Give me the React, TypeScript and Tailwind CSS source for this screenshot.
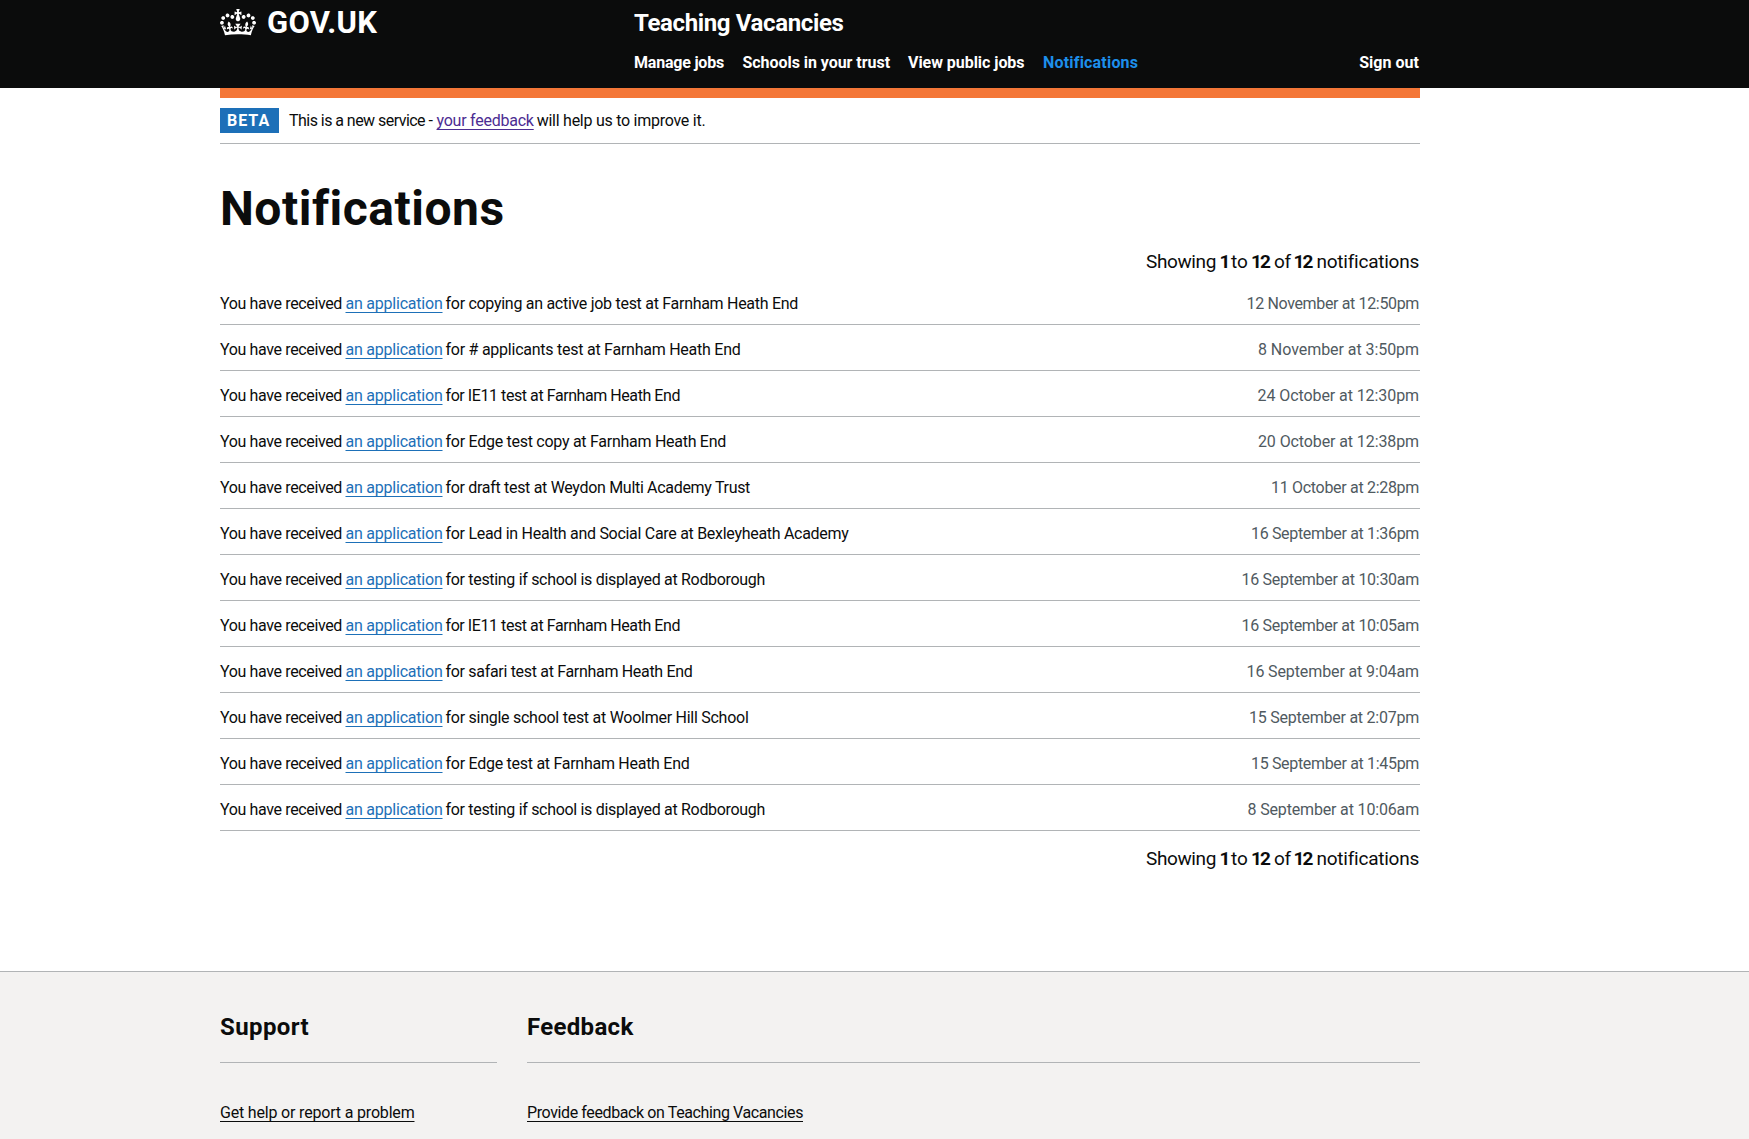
import React from "react";

type Notification = {
  text: string;
  textTracking: string;
  date: string;
  dateTracking: string;
};

const notifications: Notification[] = [
  { text: "for copying an active job test at Farnham Heath End", textTracking: "tracking-[-0.287px]", date: "12 November at 12:50pm", dateTracking: "tracking-[-0.349px]" },
  { text: "for # applicants test at Farnham Heath End", textTracking: "tracking-[-0.249px]", date: "8 November at 3:50pm", dateTracking: "tracking-[-0.059px]" },
  { text: "for IE11 test at Farnham Heath End", textTracking: "tracking-[-0.432px]", date: "24 October at 12:30pm", dateTracking: "tracking-[-0.08px]" },
  { text: "for Edge test copy at Farnham Heath End", textTracking: "tracking-[-0.273px]", date: "20 October at 12:38pm", dateTracking: "tracking-[-0.103px]" },
  { text: "for draft test at Weydon Multi Academy Trust", textTracking: "tracking-[-0.313px]", date: "11 October at 2:28pm", dateTracking: "tracking-[-0.309px]" },
  { text: "for Lead in Health and Social Care at Bexleyheath Academy", textTracking: "tracking-[-0.293px]", date: "16 September at 1:36pm", dateTracking: "tracking-[-0.332px]" },
  { text: "for testing if school is displayed at Rodborough", textTracking: "tracking-[-0.316px]", date: "16 September at 10:30am", dateTracking: "tracking-[-0.283px]" },
  { text: "for IE11 test at Farnham Heath End", textTracking: "tracking-[-0.432px]", date: "16 September at 10:05am", dateTracking: "tracking-[-0.283px]" },
  { text: "for safari test at Farnham Heath End", textTracking: "tracking-[-0.314px]", date: "16 September at 9:04am", dateTracking: "tracking-[-0.115px]" },
  { text: "for single school test at Woolmer Hill School", textTracking: "tracking-[-0.265px]", date: "15 September at 2:07pm", dateTracking: "tracking-[-0.241px]" },
  { text: "for Edge test at Farnham Heath End", textTracking: "tracking-[-0.271px]", date: "15 September at 1:45pm", dateTracking: "tracking-[-0.332px]" },
  { text: "for testing if school is displayed at Rodborough", textTracking: "tracking-[-0.316px]", date: "8 September at 10:06am", dateTracking: "tracking-[-0.161px]" },
];

const underlined = "underline decoration-1 underline-offset-[3px] [text-decoration-skip-ink:none]";

function Crown() {
  return (
    <svg viewBox="0 0 132 97" className="mt-[9px] h-[26.5px] w-9 fill-white" aria-hidden="true">
      <path
        fillRule="evenodd"
        d="M25 30.2c3.5 1.5 7.7-.2 9.1-3.7 1.5-3.6-.2-7.8-3.9-9.2-3.6-1.4-7.6.3-9.1 3.9-1.4 3.5.3 7.5 3.9 9zM9 39.5c3.6 1.5 7.8-.2 9.2-3.7 1.5-3.6-.2-7.8-3.9-9.1-3.6-1.5-7.6.2-9.1 3.8-1.4 3.5.3 7.5 3.8 9zM4.4 57.2c3.5 1.5 7.7-.2 9.1-3.8 1.5-3.6-.2-7.7-3.9-9.1-3.5-1.5-7.6.3-9.1 3.8-1.4 3.5.3 7.6 3.9 9.1zm38.3-21.4c3.5 1.5 7.7-.2 9.1-3.8 1.5-3.6-.2-7.7-3.9-9.1-3.6-1.5-7.6.3-9.1 3.8-1.3 3.6.4 7.7 3.9 9.1zm64.4-5.6c-3.6 1.5-7.8-.2-9.1-3.7-1.5-3.6.2-7.8 3.8-9.2 3.6-1.4 7.7.3 9.2 3.9 1.3 3.5-.4 7.5-3.9 9zm15.9 9.3c-3.6 1.5-7.7-.2-9.1-3.7-1.5-3.6.2-7.8 3.7-9.1 3.6-1.5 7.7.2 9.2 3.8 1.5 3.5-.3 7.5-3.8 9zm4.7 17.7c-3.6 1.5-7.8-.2-9.2-3.8-1.5-3.6.2-7.7 3.9-9.1 3.6-1.5 7.7.3 9.2 3.8 1.3 3.5-.4 7.6-3.9 9.1zM89.3 35.8c-3.6 1.5-7.8-.2-9.2-3.8-1.4-3.6.2-7.7 3.9-9.1 3.6-1.5 7.7.3 9.2 3.8 1.4 3.6-.3 7.7-3.9 9.1zM69.7 17.7l8.9 4.7V9.3l-8.9 2.8c-.2-.3-.5-.6-.9-.9L72.4 0H59.6l3.5 11.2c-.3.3-.6.5-.9.9l-8.8-2.8v13.1l8.8-4.7c.3.3.6.7.9.9l-5 15.4v.1c-.2.8-.4 1.6-.4 2.4 0 4.1 3.1 7.5 7 8.1h.2c.3 0 .7.1 1 .1.4 0 .7 0 1-.1h.2c4-.6 7.1-4.1 7.1-8.1 0-.8-.1-1.7-.4-2.4V34l-5.1-15.4c.4-.2.7-.6 1-.9zM66 92.8c16.9 0 32.8 1.1 47.1 3.2 4-16.9 8.9-26.7 14-33.5l-9.6-3.4c1 4.9 1.1 7.2 0 10.2-1.5-1.4-3-4.3-4.2-8.7L108.6 76c2.8-2 5-3.2 7.5-3.3-4.4 9.4-10 11.9-13.6 11.2-4.3-.8-6.3-4.6-5.6-7.9 1-4.7 5.7-5.9 8-.5 4.3-8.7-3-11.4-7.6-8.8 7.1-7.2 7.9-13.5 2.1-21.1-8 6.1-8.1 12.3-4.5 20.8-4.7-5.4-12.1-2.5-9.5 6.2 3.4-5.2 7.9-2 7.2 3.1-.6 4.3-6.4 7.8-13.5 7.2-10.3-.9-10.9-8-11.2-13.8 2.5-.5 7.1 1.8 11 7.3L80.2 60c-4.1 4.4-8 5.3-12.3 5.4 1.4-4.4 8-11.6 8-11.6H55.5s6.4 7.2 7.9 11.6c-4.2-.1-8-1-12.3-5.4l1.4 16.4c3.9-5.5 8.5-7.7 10.9-7.3-.3 5.8-.9 12.8-11.1 13.8-7.2.6-12.9-2.9-13.5-7.2-.7-5 3.8-8.3 7.1-3.1 2.7-8.7-4.6-11.6-9.4-6.2 3.7-8.5 3.6-14.7-4.6-20.8-5.8 7.6-5 13.9 2.2 21.1-4.7-2.6-11.9.1-7.7 8.8 2.3-5.5 7.1-4.2 8.1.5.7 3.3-1.3 7.1-5.7 7.9-3.5.7-9-1.8-13.5-11.2 2.5.1 4.7 1.3 7.5 3.3l-4.7-15.4c-1.2 4.4-2.7 7.2-4.3 8.7-1.1-3-.9-5.3 0-10.2l-9.5 3.4c5 6.9 9.9 16.7 14 33.5 14.8-2.1 30.8-3.2 47.7-3.2z"
      />
    </svg>
  );
}

function Summary({ className }: { className: string }) {
  return (
    <p className={`flex h-[25px] justify-end text-[19px] leading-[25px] whitespace-nowrap ${className}`}>
      <span className="w-[73.5px] tracking-[-0.379px]">Showing</span>
      <b className="w-[11.5px] tracking-[-1.5px]">1</b>
      <span className="w-5">to</span>
      <b className="w-[23px] tracking-[-1.9px]">12</b>
      <span className="w-[19.5px] tracking-[-0.4px]">of</span>
      <b className="w-[23px] tracking-[-1.9px]">12</b>
      <span className="w-[103.5px] tracking-[-0.24px]">notifications</span>
    </p>
  );
}

export default function App() {
  return (
    <div className="flex h-[1139px] flex-col overflow-hidden bg-white font-['Roboto',sans-serif] text-base leading-5 text-[#0b0c0c]">
      <header className="h-[88px] shrink-0 bg-[#0b0c0c] text-white">
        <div className="ml-[220px] flex w-[1200px] font-bold whitespace-nowrap">
          <div className="flex w-[414px]">
            <Crown />
            <span className="mt-[8px] ml-[11px] text-[31px] leading-[30px] tracking-[0.35px]">GOV.UK</span>
          </div>
          <div className="flex-1">
            <p className="mt-[8px] text-2xl leading-[30px] tracking-[-0.359px]">Teaching Vacancies</p>
            <nav className="mt-[15px] flex pr-px">
              <a className="w-[108.5px] tracking-[-0.207px]">Manage jobs</a>
              <a className="w-[165.5px] tracking-[-0.045px]">Schools in your trust</a>
              <a className="w-[135px] tracking-[-0.045px]">View public jobs</a>
              <a className="tracking-[0.192px] text-[#1d8feb]">Notifications</a>
              <a className="ml-auto tracking-[0.03px]">Sign out</a>
            </nav>
          </div>
        </div>
      </header>

      <div className="ml-[220px] w-[1200px] shrink-0">
        <div className="h-[10px] bg-[#f47738]" />
        <div className="flex h-[46px] items-start border-b border-[#b1b4b6] pt-[10px] whitespace-nowrap">
          <strong className="h-[25px] w-[59px] bg-[#1d70b8] pl-[7px] leading-[25px] tracking-[1px] text-white">BETA</strong>
          <p className="flex pt-[3px] pl-[10px]">
            <span className="w-[147.5px] tracking-[-0.54px]">This is a new service -</span>
            <a className={`tracking-[-0.24px] text-[#4c2c92] ${underlined}`}>your feedback</a>
            <span className="pl-[3px] tracking-[-0.26px]">will help us to improve it.</span>
          </p>
        </div>

        <main className="pt-10">
          <h1 className="h-[50px] text-5xl leading-[50px] font-bold tracking-[0.5px]">Notifications</h1>
          <Summary className="mt-[15px]" />
          <ul className="mt-[5px]">
            {notifications.map((n, i) => (
              <li key={i} className="flex h-[46px] border-b border-[#b1b4b6] pt-[15px] whitespace-nowrap">
                <span className="w-[125.5px] tracking-[-0.364px]">You have received</span>
                <a className={`h-5 tracking-[-0.223px] text-[#1d70b8] ${underlined}`}>an application</a>
                <span className={`pl-[3px] ${n.textTracking}`}>{n.text}</span>
                <span className={`mr-px ml-auto text-[#505a5f] ${n.dateTracking}`}>{n.date}</span>
              </li>
            ))}
          </ul>
          <Summary className="mt-[15px]" />
        </main>
      </div>

      <footer className="mt-[100px] flex-1 border-t border-[#b1b4b6] bg-[#f3f2f1]">
        <div className="ml-[220px] flex w-[1200px] gap-[30px] pt-[40px] whitespace-nowrap">
          <section className="w-[277px]">
            <h2 className="h-[51px] border-b border-[#b1b4b6] text-2xl leading-[30px] font-bold tracking-[0.39px]">Support</h2>
            <p className="mt-[40px]">
              <a className={`tracking-[-0.181px] ${underlined}`}>Get help or report a problem</a>
            </p>
          </section>
          <section className="w-[893px]">
            <h2 className="h-[51px] border-b border-[#b1b4b6] text-2xl leading-[30px] font-bold tracking-[0.31px]">Feedback</h2>
            <p className="mt-[40px]">
              <a className={`tracking-[-0.392px] ${underlined}`}>Provide feedback on Teaching Vacancies</a>
            </p>
          </section>
        </div>
      </footer>
    </div>
  );
}
